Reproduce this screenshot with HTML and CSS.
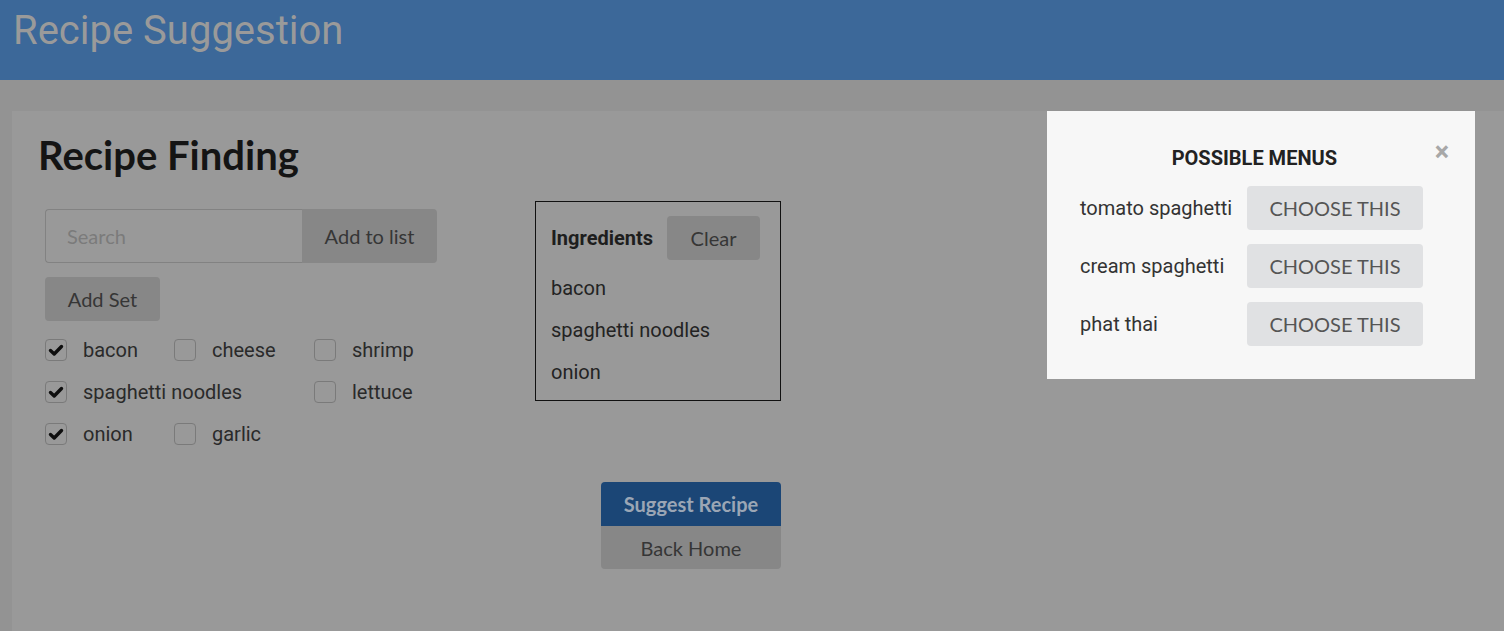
FILE: index.html
```html
<!DOCTYPE html>
<html lang="en">
<head>
<meta charset="utf-8">
<title>Recipe Suggestion</title>
<link rel="stylesheet" href="styles.css">
</head>
<body>
<header class="topbar">
  <h1 class="app-title">Recipe Suggestion</h1>
</header>
<main class="card">
  <h2 class="page-title">Recipe Finding</h2>
  <div class="workspace">
    <div class="picker">
      <div class="search-row">
        <input class="search-input" type="text" placeholder="Search">
        <button class="btn btn-add">Add to list</button>
      </div>
      <button class="btn btn-set">Add Set</button>
      <div class="check-grid">
        <label class="check"><span class="box checked"><svg viewBox="0 0 20 20"><path d="M4.5 10.5 L8.2 14 L15.5 6.5" /></svg></span>bacon</label>
        <label class="check"><span class="box"></span>cheese</label>
        <label class="check"><span class="box"></span>shrimp</label>
        <label class="check span2"><span class="box checked"><svg viewBox="0 0 20 20"><path d="M4.5 10.5 L8.2 14 L15.5 6.5" /></svg></span>spaghetti noodles</label>
        <label class="check"><span class="box"></span>lettuce</label>
        <label class="check"><span class="box checked"><svg viewBox="0 0 20 20"><path d="M4.5 10.5 L8.2 14 L15.5 6.5" /></svg></span>onion</label>
        <label class="check"><span class="box"></span>garlic</label>
      </div>
    </div>
    <section class="ingredients">
      <div class="ing-head">
        <span class="ing-title">Ingredients</span>
        <button class="btn btn-clear">Clear</button>
      </div>
      <ul class="ing-list">
        <li>bacon</li>
        <li>spaghetti noodles</li>
        <li>onion</li>
      </ul>
    </section>
  </div>
  <div class="actions">
    <button class="btn-suggest">Suggest Recipe</button>
    <button class="btn-home">Back Home</button>
  </div>
</main>
<div class="modal">
  <div class="modal-head">
    <span class="modal-title">POSSIBLE MENUS</span>
    <span class="modal-close">&times;</span>
  </div>
  <div class="menu-row"><span class="menu-name">tomato spaghetti</span><button class="btn-choose">Choose this</button></div>
  <div class="menu-row"><span class="menu-name">cream spaghetti</span><button class="btn-choose">Choose this</button></div>
  <div class="menu-row"><span class="menu-name">phat thai</span><button class="btn-choose">Choose this</button></div>
</div>
</body>
</html>
```
FILE: styles.css
```css
* { box-sizing: border-box; }
html, body { margin: 0; padding: 0; }
body {
  background: #939393;
  font-family: Roboto, "Liberation Sans", sans-serif;
  color: #262626;
  overflow: hidden;
  height: 631px;
}
.topbar {
  height: 80px;
  background: #3c6899;
}
.app-title {
  margin: 0;
  padding: 6px 0 0 13px;
  font-family: Roboto, sans-serif;
  font-weight: 400;
  font-size: 40px;
  line-height: 50px;
  color: #9a9a9a;
}
.card {
  margin: 31px 0 0 12px;
  background: #999999;
  height: 520px;
  padding: 23px 0 0 26px;
  position: relative;
}
.page-title {
  margin: 0;
  font-family: Lato, sans-serif;
  font-weight: 700;
  font-size: 40px;
  line-height: 42px;
  color: #141414;
}
.workspace {
  display: flex;
  align-items: flex-start;
  margin-top: 25px;
  padding-left: 7px;
}
.picker {
  width: 490px;
  padding-top: 8px;
}
.search-row {
  display: flex;
  height: 54px;
}
.search-input {
  width: 257px;
  height: 54px;
  border: 1px solid #828282;
  border-right: none;
  border-radius: 4px 0 0 4px;
  background: #999999;
  padding: 0 0 0 21px;
  font-family: Lato, sans-serif;
  font-size: 20px;
  color: #333;
  outline: none;
}
.search-input::placeholder { color: #7b7b7b; }
.btn {
  border: none;
  background: #878787;
  color: #363636;
  font-family: Lato, sans-serif;
  font-size: 20px;
  border-radius: 4px;
  padding: 0;
}
.btn-add {
  width: 135px;
  height: 54px;
  border-radius: 0 4px 4px 0;
}
.btn-set {
  display: block;
  margin-top: 14px;
  width: 115px;
  height: 44px;
}
.check-grid {
  margin-top: 8px;
  display: grid;
  grid-template-columns: 129px 140px auto;
  grid-auto-rows: 42px;
}
.check {
  display: flex;
  align-items: center;
  font-size: 20px;
  color: #2a2a2a;
}
.span2 { grid-column: span 2; }
.box {
  width: 22px;
  height: 22px;
  border: 1px solid #7a7a7a;
  border-radius: 4px;
  margin-right: 16px;
  flex: none;
  display: flex;
}
.box svg {
  width: 20px;
  height: 20px;
  fill: none;
  stroke: #0e0e0e;
  stroke-width: 3.4;
  stroke-linecap: round;
  stroke-linejoin: round;
}
.ingredients {
  width: 246px;
  height: 200px;
  border: 1px solid #111;
  padding: 14px 0 0 15px;
}
.ing-head {
  display: flex;
  align-items: center;
  height: 44px;
}
.ing-title {
  font-weight: 700;
  font-size: 20px;
  color: #1e1e1e;
  width: 116px;
}
.btn-clear {
  width: 93px;
  height: 44px;
}
.ing-list {
  list-style: none;
  margin: 7px 0 0;
  padding: 0;
}
.ing-list li {
  font-size: 20px;
  line-height: 42px;
  color: #232323;
}
.actions {
  margin: 27px 0 0 563px;
  width: 180px;
  display: flex;
  flex-direction: column;
  border-radius: 4px;
  overflow: hidden;
}
.btn-suggest, .btn-home {
  border: none;
  padding: 0;
  font-family: Lato, sans-serif;
  font-size: 20px;
}
.btn-suggest {
  height: 44px;
  background: #1b4676;
  color: #9ba6b5;
  font-weight: 700;
}
.btn-home {
  height: 43px;
  background: #878787;
  color: #363636;
}
.modal {
  position: absolute;
  left: 1047px;
  top: 111px;
  width: 428px;
  height: 268px;
  background: #f7f7f7;
  padding: 35px 26px 0 33px;
}
.modal-head {
  display: flex;
  align-items: center;
  height: 24px;
  margin-bottom: 16px;
}
.modal-title {
  flex: 1;
  text-align: center;
  font-weight: 700;
  font-size: 20px;
  color: #222;
  padding-right: 6px;
}
.modal-close {
  font-size: 27px;
  font-weight: 700;
  color: #a8a8a8;
  line-height: 24px;
  margin-top: -12px;
}
.menu-row {
  display: flex;
  align-items: center;
  height: 44px;
  margin-bottom: 14px;
}
.menu-name {
  width: 167px;
  font-size: 20px;
  color: #333;
}
.btn-choose {
  width: 176px;
  height: 44px;
  border: none;
  border-radius: 4px;
  background: #e0e1e3;
  color: #555;
  font-family: Lato, sans-serif;
  font-size: 20px;
  text-transform: uppercase;
  padding: 0;
}
```
